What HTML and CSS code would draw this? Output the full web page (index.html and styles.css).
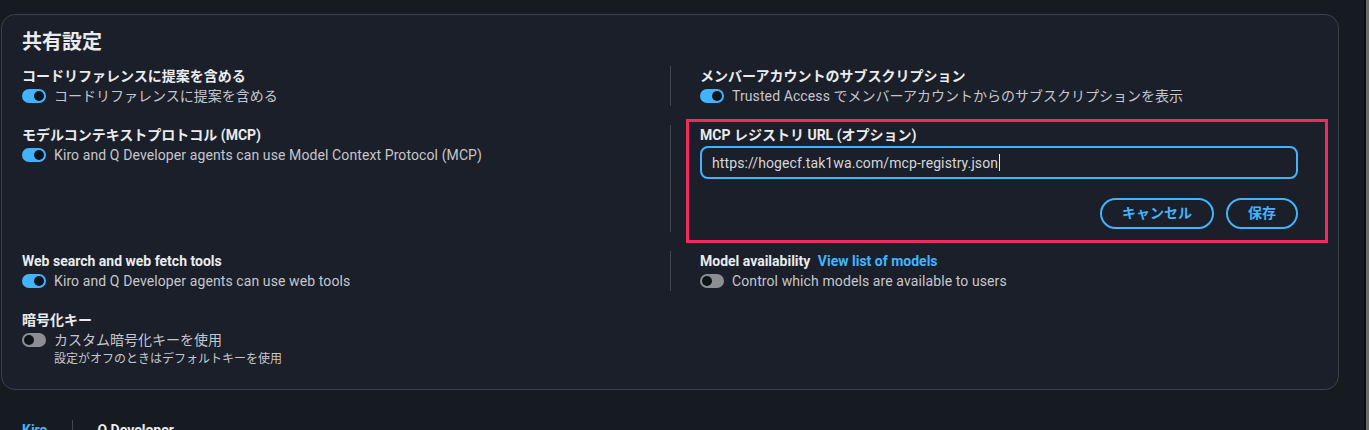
FILE: index.html
```html
<!DOCTYPE html>
<html lang="ja">
<head>
<meta charset="utf-8">
<title>共有設定</title>
<link rel="stylesheet" href="styles.css">
</head>
<body>
<div class="page">
  <main class="content">
    <section class="card">
      <h2 class="card-title">共有設定</h2>
      <div class="grid">
        <div class="cell">
          <div class="label">コードリファレンスに提案を含める</div>
          <div class="toggle-row"><span class="toggle on"><span class="knob"></span></span><span class="toggle-text">コードリファレンスに提案を含める</span></div>
        </div>
        <div class="cell cell-right">
          <div class="label">メンバーアカウントのサブスクリプション</div>
          <div class="toggle-row"><span class="toggle on"><span class="knob"></span></span><span class="toggle-text"><span class="latin">Trusted Access</span> でメンバーアカウントからのサブスクリプションを表示</span></div>
        </div>

        <div class="cell">
          <div class="label">モデルコンテキストプロトコル (MCP)</div>
          <div class="toggle-row"><span class="toggle on"><span class="knob"></span></span><span class="toggle-text latin">Kiro and Q Developer agents can use Model Context Protocol (MCP)</span></div>
        </div>
        <div class="cell cell-right cell-form">
          <div class="highlight"></div>
          <div class="label">MCP レジストリ URL (オプション)</div>
          <div class="input"><span class="input-value">https://hogecf.tak1wa.com/mcp-registry.json</span><span class="caret"></span></div>
          <div class="actions">
            <button class="btn">キャンセル</button>
            <button class="btn">保存</button>
          </div>
        </div>

        <div class="cell">
          <div class="label">Web search and web fetch tools</div>
          <div class="toggle-row"><span class="toggle on"><span class="knob"></span></span><span class="toggle-text latin">Kiro and Q Developer agents can use web tools</span></div>
        </div>
        <div class="cell cell-right">
          <div class="label">Model availability <a class="link">View list of models</a></div>
          <div class="toggle-row"><span class="toggle off"><span class="knob"></span></span><span class="toggle-text latin">Control which models are available to users</span></div>
        </div>

        <div class="cell">
          <div class="label">暗号化キー</div>
          <div class="toggle-row"><span class="toggle off"><span class="knob"></span></span><span class="toggle-text">カスタム暗号化キーを使用</span></div>
          <div class="desc">設定がオフのときはデフォルトキーを使用</div>
        </div>
        <div class="cell cell-empty"></div>
      </div>
    </section>
    <div class="tabs">
      <span class="tab active">Kiro</span>
      <span class="tab">Q Developer</span>
    </div>
  </main>
  <div class="scrollbar"></div>
</div>
</body>
</html>
```

FILE: styles.css
```css
* { box-sizing: border-box; }

html, body {
  margin: 0;
  padding: 0;
  background: #161a21;
  font-family: Roboto, "Noto Sans CJK JP", sans-serif;
  font-size: 14px;
  color: #c6c6cd;
}

.page {
  display: flex;
  height: 430px;
  overflow: hidden;
}

.content {
  flex: 1;
  padding: 14px 25px 0 1px;
}

.scrollbar {
  width: 5px;
  border-left: 2px solid #0c0d0f;
  background: #6b6b6d;
}

.card {
  background: #1a1f29;
  border: 1px solid #3b404b;
  border-radius: 14px;
  padding: 13px 20px 21px 20px;
}

.card-title {
  margin: 0;
  font-size: 20px;
  line-height: 28px;
  font-weight: 700;
  color: #e9ebed;
}

.grid {
  margin-top: 10px;
  display: grid;
  grid-template-columns: 1fr 1fr;
  row-gap: 19px;
}

.cell {
  min-width: 0;
}

.cell-right {
  position: relative;
  border-left: 1px solid #414750;
  padding-left: 29px;
  padding-right: 20px;
}

.cell-empty {
  border-left: none;
}

.cell-form {
  padding-bottom: 3px;
}

.label {
  font-weight: 700;
  line-height: 20px;
  color: #e9ebed;
  white-space: nowrap;
}

.link {
  color: #42b4ff;
  font-weight: 700;
  margin-left: 4px;
  cursor: pointer;
}

.toggle-row {
  display: flex;
  align-items: center;
  gap: 8px;
  height: 20px;
  line-height: 20px;
  white-space: nowrap;
}

.toggle {
  position: relative;
  width: 24px;
  height: 14px;
  border-radius: 7px;
  flex: none;
}

.toggle.on { background: #42b4ff; }
.toggle.off { background: #8d8d94; }

.knob {
  position: absolute;
  top: 2px;
  width: 10px;
  height: 10px;
  border-radius: 50%;
  background: #0f141a;
}

.toggle.on .knob { right: 2px; }
.toggle.off .knob { left: 2px; }

.toggle-text {
  color: #c6c6cd;
}

.latin {
  letter-spacing: 0.1px;
}

.desc {
  margin-top: 1px;
  padding-left: 32px;
  font-size: 12px;
  line-height: 17px;
  color: #c6c6cd;
}

.input {
  margin-top: 1px;
  height: 33px;
  border: 2px solid #42b4ff;
  border-radius: 8px;
  padding: 0 10px;
  display: flex;
  align-items: center;
  color: #d5d7da;
  background: #1a1f29;
  letter-spacing: 0.1px;
}

.caret {
  display: inline-block;
  width: 1px;
  height: 17px;
  background: #e9ebed;
  margin-left: 1px;
}

.actions {
  margin-top: 19px;
  display: flex;
  justify-content: flex-end;
  gap: 12px;
}

.btn {
  height: 31px;
  border: 2px solid #42b4ff;
  border-radius: 16px;
  background: transparent;
  color: #42b4ff;
  font-family: Roboto, "Noto Sans CJK JP", sans-serif;
  font-size: 14px;
  font-weight: 700;
  padding: 0 20px;
  line-height: 27px;
}

.highlight {
  position: absolute;
  left: 15px;
  top: -6px;
  width: 642px;
  height: 124px;
  border: 3px solid #f2295f;
  pointer-events: none;
}

.tabs {
  margin-top: 30px;
  display: flex;
  padding-left: 21px;
  line-height: 20px;
  font-weight: 700;
  color: #e9ebed;
}

.tab {
  padding-right: 23px;
}

.tab.active {
  color: #42b4ff;
  padding-right: 25px;
  border-right: 1px solid #414750;
}

.tab + .tab {
  padding-left: 24px;
}
```
